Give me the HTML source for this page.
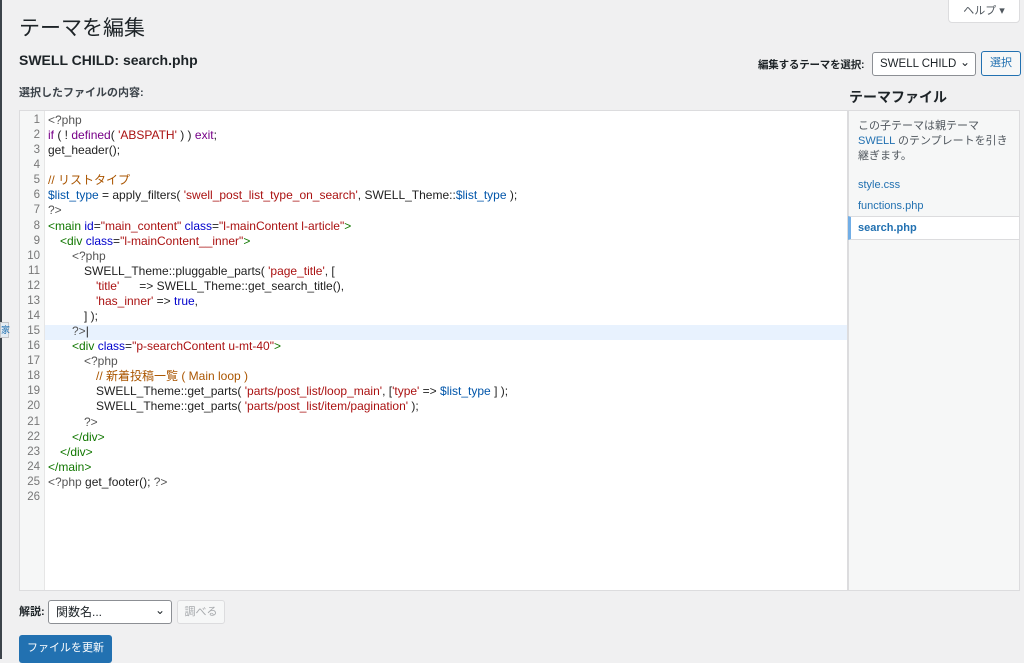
<!DOCTYPE html>
<html><head><meta charset="utf-8"><style>
*{box-sizing:border-box;margin:0;padding:0}
body{width:1024px;height:659px;overflow:hidden;background:#f0f0f1;font-family:"Liberation Sans","Noto Sans CJK JP",sans-serif;color:#1d2327;position:relative}
.a{position:absolute}
h1{position:absolute;left:19px;top:12px;font-size:21px;font-weight:400;color:#1d2327}
.help{left:948px;top:-2px;width:72px;height:25px;background:#fff;border:1px solid #dcdcde;border-radius:0 0 4px 4px;font-size:11px;color:#50575e;text-align:center;line-height:24px}
.ed{left:19px;top:110px;width:829px;height:481px;background:#fff;border:1px solid #dcdcde}
.gut{left:0;top:0;width:25px;height:100%;background:#f6f7f7;border-right:1px solid #e6e6e6}
.ln{position:absolute;left:0;width:20px;text-align:right;font-size:11.5px;color:#777;line-height:15.08px}
.code{position:absolute;left:28px;top:2px;font-size:12px;line-height:15.08px;white-space:pre;color:#222}
.i{display:inline-block;width:12px}
.k{color:#708}.s{color:#a11}.c{color:#a50}.v{color:#05a}.t{color:#170}.at{color:#00c}.m{color:#555}
.side{left:848px;top:110px;width:172px;height:481px;background:#f6f7f7;border:1px solid #dcdcde;font-size:11px}
.lnk{color:#2271b1}
</style></head><body>
<div class="a" style="left:0;top:0;width:2px;height:659px;background:#3c434a"></div>
<div class="a" style="left:0;top:322px;width:9px;height:16px;background:#e4ecf3;border:1px solid #c3c4c7;font-size:9px;color:#2271b1;line-height:14px">家</div>
<h1>テーマを編集</h1>
<div class="a help">ヘルプ ▾</div>
<div class="a" style="left:19px;top:52px;font-size:14px;font-weight:600">SWELL CHILD: search.php</div>
<div class="a" style="left:19px;top:84px;font-size:11px;font-weight:600;color:#3c434a">選択したファイルの内容:</div>
<div class="a" style="left:758px;top:57px;font-size:10.5px;font-weight:600;color:#1d2327;letter-spacing:-0.2px">編集するテーマを選択:</div>
<div class="a" style="left:872px;top:52px;width:104px;height:24px;background:#fff;border:1px solid #8c8f94;border-radius:3px;font-size:11.5px;line-height:22px;padding-left:7px">SWELL CHILD<span style="position:absolute;right:5px;top:-2px;font-size:12px">⌄</span></div>
<div class="a" style="left:981px;top:51px;width:40px;height:25px;background:#f6f7f7;border:1px solid #2271b1;border-radius:3px;font-size:11px;color:#2271b1;text-align:center;line-height:23px">選択</div>
<div class="a" style="left:849px;top:87px;font-size:14px;font-weight:700">テーマファイル</div>
<div class="a ed"><div class="a gut"></div>
<div class="a" style="left:25px;top:214px;width:802px;height:15px;background:#e8f2fe"></div>
<div class="ln" style="top:2px">1<br>2<br>3<br>4<br>5<br>6<br>7<br>8<br>9<br>10<br>11<br>12<br>13<br>14<br>15<br>16<br>17<br>18<br>19<br>20<br>21<br>22<br>23<br>24<br>25<br>26</div>
<div class="code"><span class="m">&lt;?php</span>
<span class="k">if</span> ( ! <span class="k">defined</span>( <span class="s">'ABSPATH'</span> ) ) <span class="k">exit</span>;
get_header();

<span class="c">// リストタイプ</span>
<span class="v">$list_type</span> = apply_filters( <span class="s">'swell_post_list_type_on_search'</span>, SWELL_Theme::<span class="v">$list_type</span> );
<span class="m">?&gt;</span>
<span class="t">&lt;main</span> <span class="at">id</span>=<span class="s">"main_content"</span> <span class="at">class</span>=<span class="s">"l-mainContent l-article"</span><span class="t">&gt;</span>
<span class="i"></span><span class="t">&lt;div</span> <span class="at">class</span>=<span class="s">"l-mainContent__inner"</span><span class="t">&gt;</span>
<span class="i"></span><span class="i"></span><span class="m">&lt;?php</span>
<span class="i"></span><span class="i"></span><span class="i"></span>SWELL_Theme::pluggable_parts( <span class="s">'page_title'</span>, [
<span class="i"></span><span class="i"></span><span class="i"></span><span class="i"></span><span class="s">'title'</span>      =&gt; SWELL_Theme::get_search_title(),
<span class="i"></span><span class="i"></span><span class="i"></span><span class="i"></span><span class="s">'has_inner'</span> =&gt; <span class="at">true</span>,
<span class="i"></span><span class="i"></span><span class="i"></span>] );
<span class="i"></span><span class="i"></span><span class="m">?&gt;</span>|
<span class="i"></span><span class="i"></span><span class="t">&lt;div</span> <span class="at">class</span>=<span class="s">"p-searchContent u-mt-40"</span><span class="t">&gt;</span>
<span class="i"></span><span class="i"></span><span class="i"></span><span class="m">&lt;?php</span>
<span class="i"></span><span class="i"></span><span class="i"></span><span class="i"></span><span class="c">// 新着投稿一覧 ( Main loop )</span>
<span class="i"></span><span class="i"></span><span class="i"></span><span class="i"></span>SWELL_Theme::get_parts( <span class="s">'parts/post_list/loop_main'</span>, [<span class="s">'type'</span> =&gt; <span class="v">$list_type</span> ] );
<span class="i"></span><span class="i"></span><span class="i"></span><span class="i"></span>SWELL_Theme::get_parts( <span class="s">'parts/post_list/item/pagination'</span> );
<span class="i"></span><span class="i"></span><span class="i"></span><span class="m">?&gt;</span>
<span class="i"></span><span class="i"></span><span class="t">&lt;/div&gt;</span>
<span class="i"></span><span class="t">&lt;/div&gt;</span>
<span class="t">&lt;/main&gt;</span>
<span class="m">&lt;?php</span> get_footer(); <span class="m">?&gt;</span>
</div></div>
<div class="a side">
<div style="position:absolute;left:9px;top:8px;width:150px;line-height:15px;color:#50575e">この子テーマは親テーマ <span class="lnk">SWELL</span> のテンプレートを引き継ぎます。</div>
<div class="lnk" style="position:absolute;left:9px;top:68px">style.css</div>
<div class="lnk" style="position:absolute;left:9px;top:89px">functions.php</div>
<div style="position:absolute;left:-1px;top:105px;width:172px;height:24px;background:#fff;border:1px solid #dcdcde;border-left:3px solid #72aee6"></div>
<div class="lnk" style="position:absolute;left:9px;top:111px;font-weight:700">search.php</div>
</div>
<div class="a" style="left:19px;top:603px;font-size:11px;font-weight:600">解説:</div>
<div class="a" style="left:48px;top:600px;width:124px;height:24px;background:#fff;border:1px solid #8c8f94;border-radius:3px;font-size:12px;line-height:22px;padding-left:7px">関数名... <span style="position:absolute;right:6px;top:-2px">⌄</span></div>
<div class="a" style="left:177px;top:600px;width:48px;height:24px;background:#f6f7f7;border:1px solid #dcdcde;border-radius:3px;font-size:11px;color:#a7aaad;text-align:center;line-height:22px">調べる</div>
<div class="a" style="left:19px;top:635px;width:93px;height:28px;background:#2271b1;border-radius:3px;font-size:11px;color:#fff;text-align:center;line-height:26px">ファイルを更新</div>
</body></html>
